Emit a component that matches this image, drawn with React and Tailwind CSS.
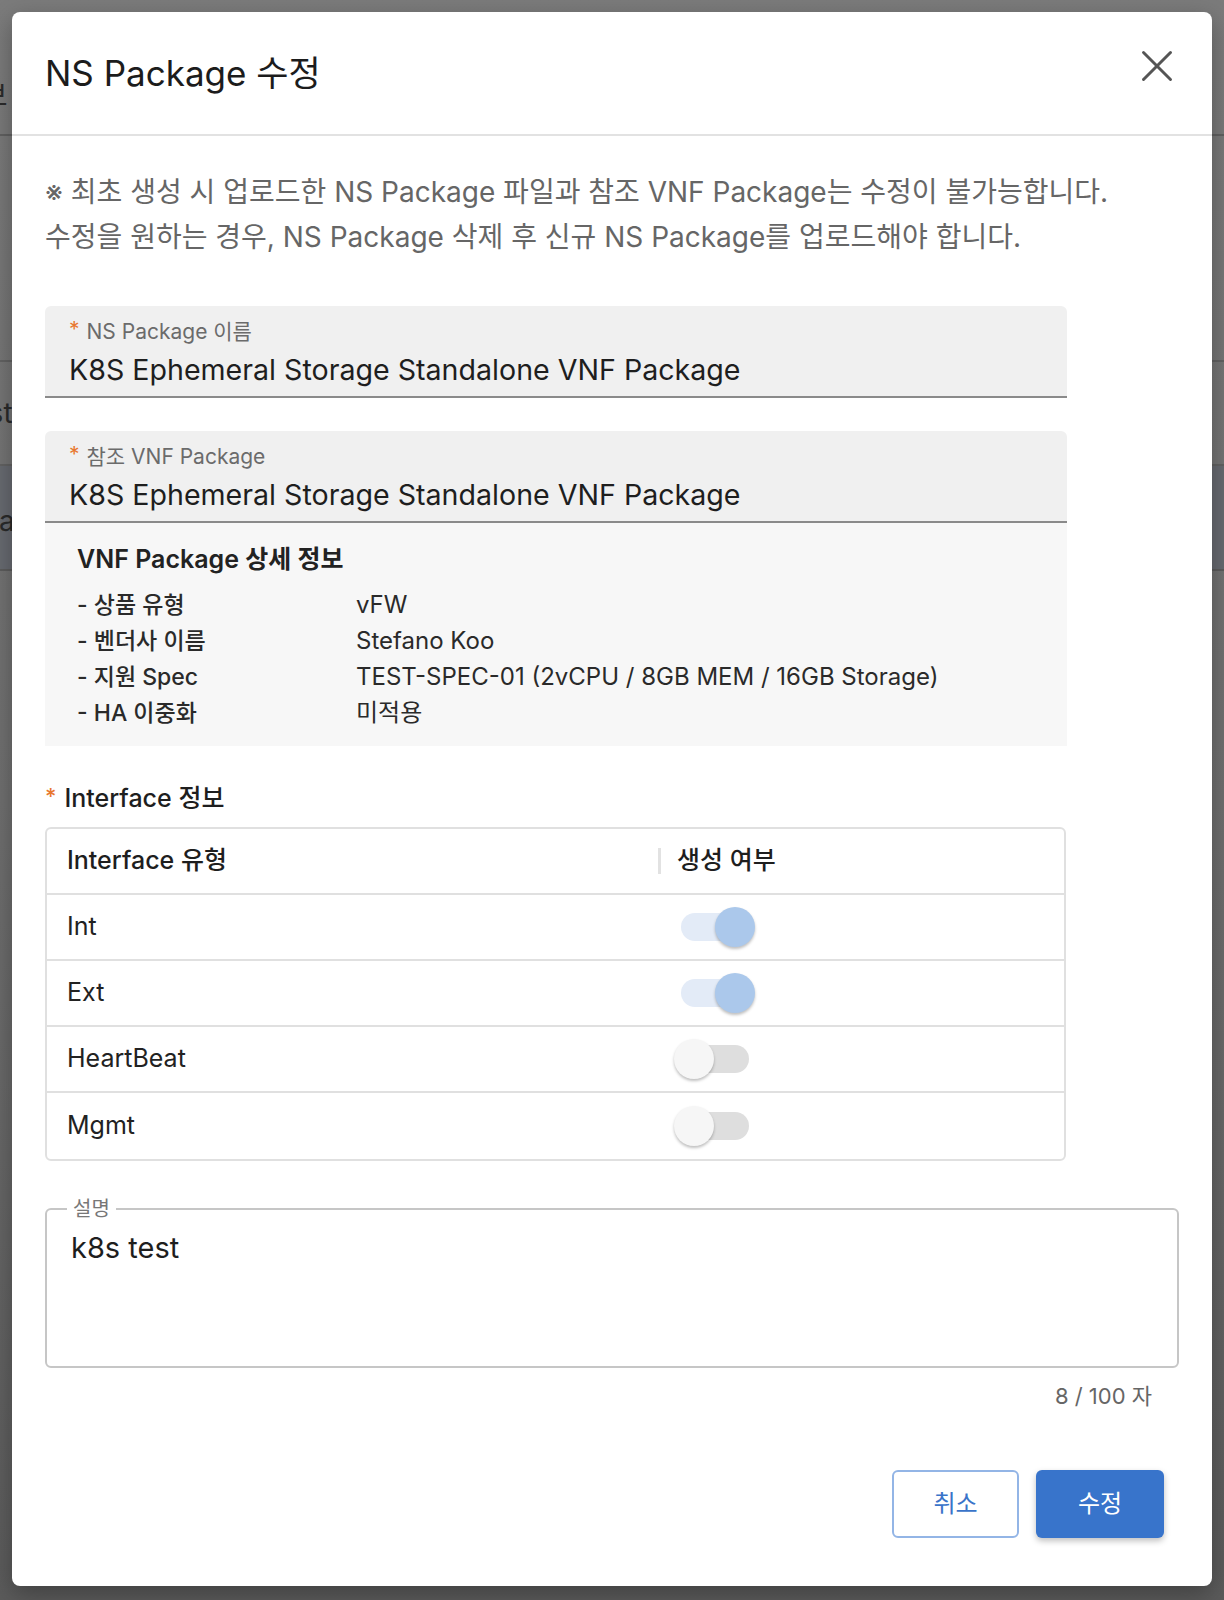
import { X } from "lucide-react";

const details = [
  { label: "- 상품 유형", value: "vFW" },
  { label: "- 벤더사 이름", value: "Stefano Koo" },
  { label: "- 지원 Spec", value: "TEST-SPEC-01 (2vCPU / 8GB MEM / 16GB Storage)" },
  { label: "- HA 이중화", value: "미적용" },
];

const interfaces = [
  { name: "Int", on: true },
  { name: "Ext", on: true },
  { name: "HeartBeat", on: false },
  { name: "Mgmt", on: false },
];

function Toggle({ on }) {
  return (
    <div className="relative w-[82px] h-[40px]">
      <div
        className={
          on
            ? "absolute left-[7px] top-[6px] w-[68px] h-[28px] rounded-full bg-[#e3ebf7]"
            : "absolute left-[7px] top-[6px] w-[68px] h-[28px] rounded-full bg-[#dedede]"
        }
      />
      <div
        className={
          on
            ? "absolute left-[41px] top-0 w-[40px] h-[40px] rounded-full bg-[#abc8eb] shadow-[0_2px_3px_rgba(0,0,0,0.25)]"
            : "absolute left-0 top-0 w-[40px] h-[40px] rounded-full bg-[#f6f6f6] shadow-[0_2px_3px_rgba(0,0,0,0.25)]"
        }
      />
    </div>
  );
}

function Field({ label, value }) {
  return (
    <div className="w-[1022px] h-[92px] bg-[#f0f0f0] rounded-t-[6px] border-b-2 border-[#8a8a8a] px-[24px] pt-[13px]">
      <div className="flex items-center h-[26px] text-[21px] text-[#6b6b6b]">
        <span className="text-[#e8772e] mr-[7px] -mt-[4px]">*</span>
        {label}
      </div>
      <div className="mt-[5px] text-[28.6px] leading-[40px] text-[#1e1e1e]">{value}</div>
    </div>
  );
}

// Background page behind the dimmed overlay
function Backdrop() {
  return (
    <div className="absolute inset-0 bg-gradient-to-b from-[#7b7b7b] via-[#6f6f6f] to-[#5b5b5b]">
      <div className="h-[136px] border-b-2 border-[#606060] flex items-end pb-[17px] text-[28px] text-[#2a2a2a]">
        <span className="-ml-[44px]">정보</span>
      </div>
      <div className="h-[226px] border-b-2 border-[#626262]" />
      <div className="h-[104px] border-b-2 border-[#626262] flex items-center text-[28px] text-[#2a2a2a]">
        <span className="-ml-[34px]">List</span>
      </div>
      <div className="h-[105px] border-b-2 border-[#5c5c5c] bg-[#676a70] flex items-center text-[28px] text-[#2a2a2a]">
        <span className="-ml-[66px] mt-[6px]">Package</span>
      </div>
    </div>
  );
}

export default function App() {
  return (
    <div className="relative h-[1600px] w-[1224px] overflow-hidden font-[Inter,'Noto_Sans_CJK_KR',sans-serif]">
      <Backdrop />

      {/* Modal */}
      <div className="absolute left-[12px] top-[12px] w-[1200px] h-[1574px] bg-white rounded-[8px] shadow-[0_8px_24px_rgba(0,0,0,0.3)] flex flex-col">
        <div className="h-[124px] border-b-2 border-[#e2e2e2] flex items-center justify-between pl-[33px] pr-[28px]">
          <h1 className="text-[35px] font-normal text-[#1c1c1c] leading-none">NS Package 수정</h1>
          <X className="self-start mt-[27px] w-[54px] h-[54px] text-[#555]" strokeWidth={1.3} />
        </div>

        <div className="px-[33px] pt-[34px] flex flex-col">
          <p className="text-[28px] leading-[45px] text-[#666]">
            ※ 최초 생성 시 업로드한 NS Package 파일과 참조 VNF Package는 수정이 불가능합니다.
            <br />
            수정을 원하는 경우, NS Package 삭제 후 신규 NS Package를 업로드해야 합니다.
          </p>

          <div className="mt-[46px]">
            <Field label="NS Package 이름" value="K8S Ephemeral Storage Standalone VNF Package" />
          </div>

          <div className="mt-[33px]">
            <Field label="참조 VNF Package" value="K8S Ephemeral Storage Standalone VNF Package" />
            <div className="w-[1022px] h-[223px] bg-[#f7f7f7] px-[32px] pt-[18px]">
              <div className="text-[25px] font-semibold text-[#222] leading-[36px]">VNF Package 상세 정보</div>
              <div className="mt-[10px] flex flex-col">
                {details.map((d) => (
                  <div key={d.label} className="flex h-[36px] items-center text-[24px] text-[#2a2a2a]">
                    <span className="w-[279px] text-[23px] font-medium">{d.label}</span>
                    <span>{d.value}</span>
                  </div>
                ))}
              </div>
            </div>
          </div>

          <div className="mt-[36px] flex items-center text-[25px] font-medium text-[#1e1e1e] leading-[32px]">
            <span className="text-[#e8772e] text-[22px] mr-[8px] -mt-[4px]">*</span>
            Interface 정보
          </div>

          <div className="mt-[13px] w-[1021px] border-2 border-[#e0e0e0] rounded-[6px]">
            <div className="grid grid-cols-[611px_1fr] h-[66px] items-center border-b-2 border-[#e0e0e0]">
              <span className="pl-[20px] text-[25px] font-medium text-[#1e1e1e]">Interface 유형</span>
              <div className="flex items-center">
                <span className="w-[3px] h-[26px] bg-[#e2e2e2]" />
                <span className="ml-[16px] text-[25px] font-medium text-[#1e1e1e]">생성 여부</span>
              </div>
            </div>
            {interfaces.map((row, i) => (
              <div
                key={row.name}
                className={
                  i < interfaces.length - 1
                    ? "grid grid-cols-[611px_1fr] h-[66px] items-center border-b-2 border-[#e0e0e0]"
                    : "grid grid-cols-[611px_1fr] h-[66px] items-center"
                }
              >
                <span className="pl-[20px] text-[25px] text-[#222]">{row.name}</span>
                <div className="pl-[16px]">
                  <Toggle on={row.on} />
                </div>
              </div>
            ))}
          </div>

          <fieldset className="mt-[37px] w-[1134px] h-[170px] border-2 border-[#c6c6c6] rounded-[6px] px-[24px] pt-0">
            <legend className="px-[6px] -ml-[4px] text-[20px] text-[#777] leading-[22px]">설명</legend>
            <div className="mt-[8px] text-[29px] text-[#1e1e1e] leading-[40px]">k8s test</div>
          </fieldset>

          <div className="w-[1107px] mt-[14px] text-right text-[22px] text-[#666] leading-[28px]">8 / 100 자</div>

          <div className="w-[1119px] mt-[60px] flex justify-end gap-[17px]">
            <button className="w-[127px] h-[68px] rounded-[6px] border-2 border-[#93b5e6] bg-white text-[24px] text-[#3a74c9]">
              취소
            </button>
            <button className="w-[128px] h-[68px] rounded-[6px] bg-[#3874cb] text-[24px] text-white shadow-[0_3px_6px_rgba(0,0,0,0.25)]">
              수정
            </button>
          </div>
        </div>
      </div>
    </div>
  );
}
